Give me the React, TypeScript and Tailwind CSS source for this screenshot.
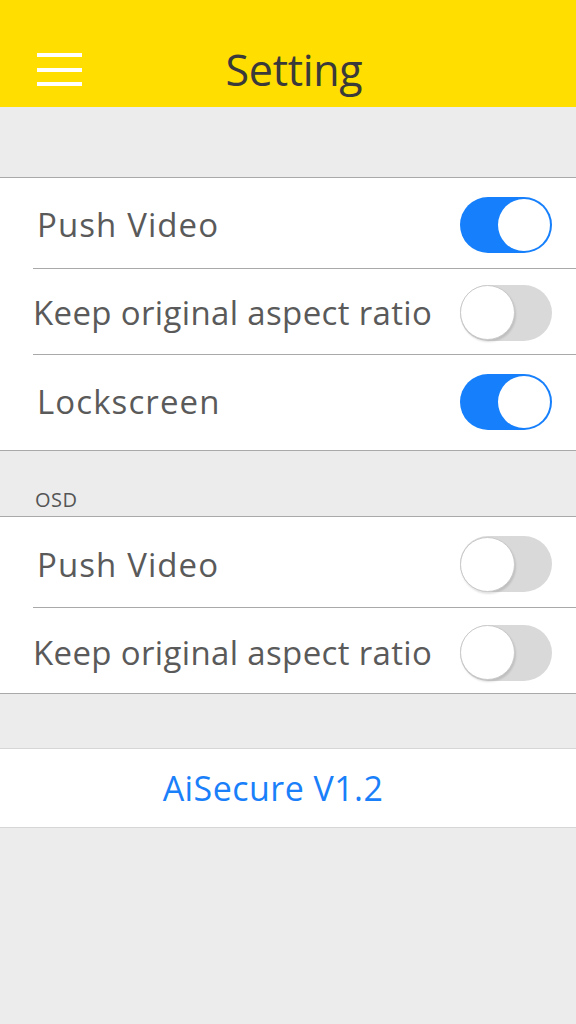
import React from "react";

function Toggle({ on }: { on: boolean }) {
  if (on) {
    return (
      <div className="flex h-[56px] w-[92px] shrink-0 items-center justify-end rounded-full bg-[#167ffb] p-[2px]">
        <div className="h-[52px] w-[52px] rounded-full bg-white" />
      </div>
    );
  }
  return (
    <div className="flex h-[56px] w-[92px] shrink-0 items-center justify-start rounded-full bg-[#d9d9d9]">
      <div className="h-[55px] w-[55px] rounded-full border border-[#c9c9c9] bg-white shadow-[1px_2px_2px_rgba(0,0,0,0.12)]" />
    </div>
  );
}

function Row({
  label,
  on,
  h,
  pl,
  pad,
  track,
}: {
  label: string;
  on: boolean;
  h: string;
  pl: string;
  pad: string;
  track: string;
}) {
  return (
    <div className={`flex items-center justify-between pr-[24px] ${h} ${pl} ${pad}`}>
      <span className={`text-[33px] leading-none text-[#5a5a5a] ${track}`}>{label}</span>
      <Toggle on={on} />
    </div>
  );
}

function Sep() {
  return <div className="ml-[33px] h-px bg-[#a9a9a9]" />;
}

export default function App() {
  return (
    <div
      className="min-h-[1024px] w-[576px] bg-[#ececec]"
      style={{ fontFamily: '"Open Sans", "Noto Sans", sans-serif' }}
    >
      <header className="flex h-[107px] items-center bg-[#ffde00] pt-[32px]">
        <div className="ml-[37px] flex w-[45px] flex-col gap-[10.5px]">
          <div className="h-[4px] bg-white" />
          <div className="h-[4px] bg-white" />
          <div className="h-[4px] bg-white" />
        </div>
        <div className="mr-[70px] flex-1 text-center text-[43px] leading-none tracking-[-0.3px] text-[#3a3a3a]">
          Setting
        </div>
      </header>

      <div className="h-[70px]" />

      <section className="border-y border-[#a9a9a9] bg-white">
        <Row label="Push Video" on h="h-[90px]" pl="pl-[37px]" pad="pt-[3px]" track="tracking-[1.1px]" />
        <Sep />
        <Row
          label="Keep original aspect ratio"
          on={false}
          h="h-[85px]"
          pl="pl-[33px]"
          pad="pt-[2px]"
          track="tracking-[0.35px]"
        />
        <Sep />
        <Row label="Lockscreen" on h="h-[95px]" pl="pl-[37px]" pad="pb-[2px]" track="tracking-[1.1px]" />
      </section>

      <div className="flex h-[65px] items-end pb-[6px] pl-[35px]">
        <span className="text-[20px] leading-none tracking-[0.5px] text-[#555555]">OSD</span>
      </div>

      <section className="border-y border-[#a9a9a9] bg-white">
        <Row label="Push Video" on={false} h="h-[90px]" pl="pl-[37px]" pad="pt-[4px]" track="tracking-[1.1px]" />
        <Sep />
        <Row
          label="Keep original aspect ratio"
          on={false}
          h="h-[85px]"
          pl="pl-[33px]"
          pad="pt-[4px]"
          track="tracking-[0.35px]"
        />
      </section>

      <div className="h-[54px]" />

      <section className="flex h-[80px] items-center justify-center border-y border-[#d6d6d6] bg-white pr-[30px]">
        <span className="text-[34px] leading-none tracking-[0.45px] text-[#1a80fa]">AiSecure V1.2</span>
      </section>
    </div>
  );
}
